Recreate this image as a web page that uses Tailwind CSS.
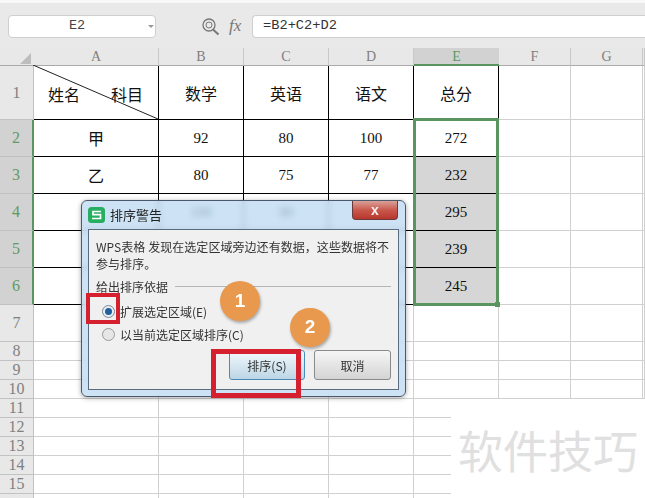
<!DOCTYPE html>
<html lang="en">
<head>
  <meta charset="UTF-8">
  <title>WPS 表格 - 排序警告</title>
  <script src="https://cdn.jsdelivr.net/npm/@tailwindcss/browser@4"></script>
</head>
<body class="bg-white">
  <div class="relative w-[645px] h-[498px] overflow-hidden bg-white font-['Noto_Sans_CJK_SC',sans-serif] text-[#111]">

    <!-- formula bar -->
    <div class="h-[48px] bg-[#e9e9e9] border-t-[3px] border-[#f8f8f8] flex items-start pt-[12px] pl-[8px]">
      <div class="relative w-[148px] h-[23px] bg-white border border-[#cfcfcf] rounded-[4px] flex items-center justify-center pr-[10px] font-['Liberation_Mono',monospace] text-[13.5px] text-[#444]">
        E2
        <div class="absolute right-[1px] top-[9px] w-0 h-0 border-x-[3px] border-x-transparent border-t-[3px] border-t-[#999]"></div>
      </div>
      <svg class="ml-[46px] mt-[3px]" width="18" height="18" viewBox="0 0 18 18" fill="none" stroke="#777">
        <circle cx="7" cy="7" r="6" stroke-width="1.3"/>
        <circle cx="7" cy="7" r="3" stroke-width="1"/>
        <path d="M11 11.5 L16.5 16.5" stroke-width="2"/>
      </svg>
      <span class="ml-[9px] mt-[1px] w-[23px] font-['Liberation_Serif',serif] italic text-[17px] leading-[20px] text-[#777]">fx</span>
      <div class="flex-1 h-[23px] bg-white border border-[#cfcfcf] rounded-l-[4px] border-r-0 flex items-center pl-[10px] font-['Liberation_Mono',monospace] text-[13.7px] text-[#333]">=B2+C2+D2</div>
    </div>

    <!-- sheet -->
    <div id="sheet" class="grid grid-cols-[34px_125px_85px_85px_85px_85px_72px_72px_2px] grid-rows-[18px_54px_37px_37px_37px_37px_37px_37px_19px_19px_19px_19px_19px_19px_19px_19px_19px_5px]"></div>

    <!-- A1 diagonal -->
    <svg class="absolute left-[33px] top-[65px]" width="125" height="54" viewBox="0 0 125 54">
      <line x1="0" y1="0" x2="125" y2="54" stroke="#222" stroke-width="1"/>
    </svg>
    <span class="absolute left-[48px] top-[82px] text-[16px] leading-[24px]">姓名</span>
    <span class="absolute left-[111px] top-[82px] text-[16px] leading-[24px]">科目</span>

    <!-- selected range -->
    <div class="absolute left-[413px] top-[118px] w-[86px] h-[188px] border-[3px] border-[#5a9460]">
      <div class="absolute -right-[4px] -bottom-[4px] w-[5px] h-[5px] bg-[#5a9460]"></div>
    </div>

    <!-- dialog -->
    <div class="absolute left-[81px] top-[200px] w-[325px] h-[197px] rounded-[6px] border border-[#4a5a6a] bg-[#bcdaf2]/75 backdrop-blur-[3px] shadow-[0_1px_5px_rgba(0,0,0,0.35)] px-[6px] pb-[6px] flex flex-col">
      <div class="h-[28px] flex items-center shrink-0">
        <svg width="17" height="16" viewBox="0 0 17 16">
          <rect width="17" height="16" rx="3.5" fill="#27ae60"/>
          <path d="M13 4.5 H5 V7.7 H12.5 V11.5 H4" fill="none" stroke="#fff" stroke-width="1.7"/>
        </svg>
        <span class="ml-[5px] text-[13px] leading-[16px] text-[#222]">排序警告</span>
      </div>
      <div class="absolute right-[7px] top-0 w-[46px] h-[19px] rounded-b-[4px] border border-t-0 border-[#6b3a3a] bg-gradient-to-b from-[#d9a09a] via-[#c9584c] to-[#b8352c] flex items-center justify-center font-['Liberation_Sans',sans-serif] font-bold text-[14px] leading-[13px] text-[#f4f0f0]">x</div>

      <div class="flex-1 border border-[#5a6c7e] bg-[#f0f0f0] pt-[8px] pl-[7px] pr-[6px] text-[12px] leading-[17px] text-[#333] flex flex-col">
        <p class="whitespace-nowrap tracking-[0.05px]">WPS表格 发现在选定区域旁边还有数据，这些数据将不<br>参与排序。</p>
        <div class="flex items-center mt-[6px] h-[17px]">
          <span class="whitespace-nowrap text-[12px]">给出排序依据</span>
          <div class="flex-1 h-px bg-[#b5b5b5] ml-[7px] mr-[1px]"></div>
        </div>
        <div class="flex items-center mt-[8px] ml-[6px] h-[17px]">
          <span class="w-[13px] h-[13px] rounded-full border border-[#7a8a9a] bg-[#e8eef4] flex items-center justify-center">
            <span class="w-[7px] h-[7px] rounded-full bg-[#1f5f9c]"></span>
          </span>
          <span class="ml-[5px] text-[12px]">扩展选定区域(E)</span>
        </div>
        <div class="flex items-center mt-[6px] ml-[6px] h-[17px]">
          <span class="w-[13px] h-[13px] rounded-full border border-[#9a9a9a] bg-[#e6e6e6]"></span>
          <span class="ml-[5px] text-[12px]">以当前选定区域排序(C)</span>
        </div>
        <div class="flex justify-end gap-[9px] mt-[7px] pr-[1px]">
          <div class="w-[76px] h-[30px] rounded-[3px] border border-[#4c8bb8] bg-gradient-to-b from-[#f4f9fc] to-[#bcd6e6] flex items-center justify-center text-[12px]">排序(S)</div>
          <div class="w-[77px] h-[30px] rounded-[3px] border border-[#8a8a8a] bg-gradient-to-b from-[#f6f6f6] to-[#d4d4d4] flex items-center justify-center text-[12px]">取消</div>
        </div>
      </div>
    </div>

    <!-- annotations -->
    <div class="absolute left-[86px] top-[293px] w-[34px] h-[31px] border-[4px] border-[#d4202f]"></div>
    <div class="absolute left-[211px] top-[349px] w-[90px] h-[49px] border-[5px] border-[#d4202f]"></div>
    <div class="absolute left-[220px] top-[281px] w-[40px] h-[40px] rounded-full bg-[#e8994e] shadow-[1px_2px_3px_rgba(0,0,0,0.3)] flex items-center justify-center font-['Liberation_Sans',sans-serif] font-bold text-[19px] text-white">1</div>
    <div class="absolute left-[290px] top-[308px] w-[40px] h-[39px] rounded-full bg-[#e8994e] shadow-[1px_2px_3px_rgba(0,0,0,0.3)] flex items-center justify-center font-['Liberation_Sans',sans-serif] font-bold text-[19px] text-white">2</div>

    <!-- watermark -->
    <div class="absolute left-[451px] top-[399px] w-[194px] h-[99px] bg-white flex items-start pl-[7px] pt-[23px] text-[45px] leading-[56px] text-[#e0e0e0] whitespace-nowrap">软件技巧</div>
  </div>

  <script>
    const colNames = ['A', 'B', 'C', 'D', 'E', 'F', 'G', ''];
    const table = [
      ['', '数学', '英语', '语文', '总分'],
      ['甲', '92', '80', '100', '272'],
      ['乙', '80', '75', '77', '232'],
      ['', '100', '90', '', '295'],
      ['', '', '', '', '239'],
      ['', '', '', '', '245']
    ];
    const sheet = document.getElementById('sheet');

    function addCell(text, cls) {
      const div = document.createElement('div');
      div.className = 'flex items-center justify-center overflow-hidden ' + cls;
      div.textContent = text;
      sheet.appendChild(div);
    }

    // header row
    addCell('', 'relative bg-[#e8e8e8] border-b border-[#aaaaaa]');
    sheet.lastChild.innerHTML = '<svg class="absolute left-[20px] top-[5px]" width="11" height="11" viewBox="0 0 11 11"><path d="M11 0V11H0Z" fill="#bdbdbd"/></svg>';
    colNames.forEach((name, i) => {
      if (i === 4) addCell(name, 'bg-[#d2d2d2] border-b-2 border-[#5a9460] font-["Liberation_Serif",serif] text-[14px] text-[#5f9a63]');
      else addCell(name, 'bg-[#e8e8e8] border-r border-b border-r-[#c8c8c8] border-b-[#aaaaaa] font-["Liberation_Serif",serif] text-[14px] text-[#808080]');
    });

    // rows 1 to 16, the last one is cut off by the window
    for (let r = 0; r < 16; r++) {
      const selected = r >= 1 && r <= 5;
      const label = r < 15 ? r + 1 : '';
      if (selected) addCell(label, 'bg-[#d2d2d2] border-r-2 border-r-[#5a9460] border-b border-b-[#c0c0c0] font-["Liberation_Serif",serif] text-[16px] text-[#5f9a63]');
      else addCell(label, 'bg-[#e8e8e8] border-r border-b border-[#c2c2c2] font-["Liberation_Serif",serif] text-[16px] text-[#808080]');

      for (let c = 0; c < 8; c++) {
        const inTable = r < 6 && c < 5;
        const text = inTable ? table[r][c] : '';
        if (!inTable) { addCell('', 'border-r border-b border-[#d0d0d0]'); continue; }
        const shade = c === 4 && r >= 2 ? ' bg-[#d6d6d6]' : '';
        if (r === 0 || c === 0) addCell(text, 'border-r border-b border-black text-[16px]' + shade);
        else addCell(text, 'border-r border-b border-black font-["Liberation_Serif",serif] text-[15px]' + shade);
      }
    }
  </script>
</body>
</html>
